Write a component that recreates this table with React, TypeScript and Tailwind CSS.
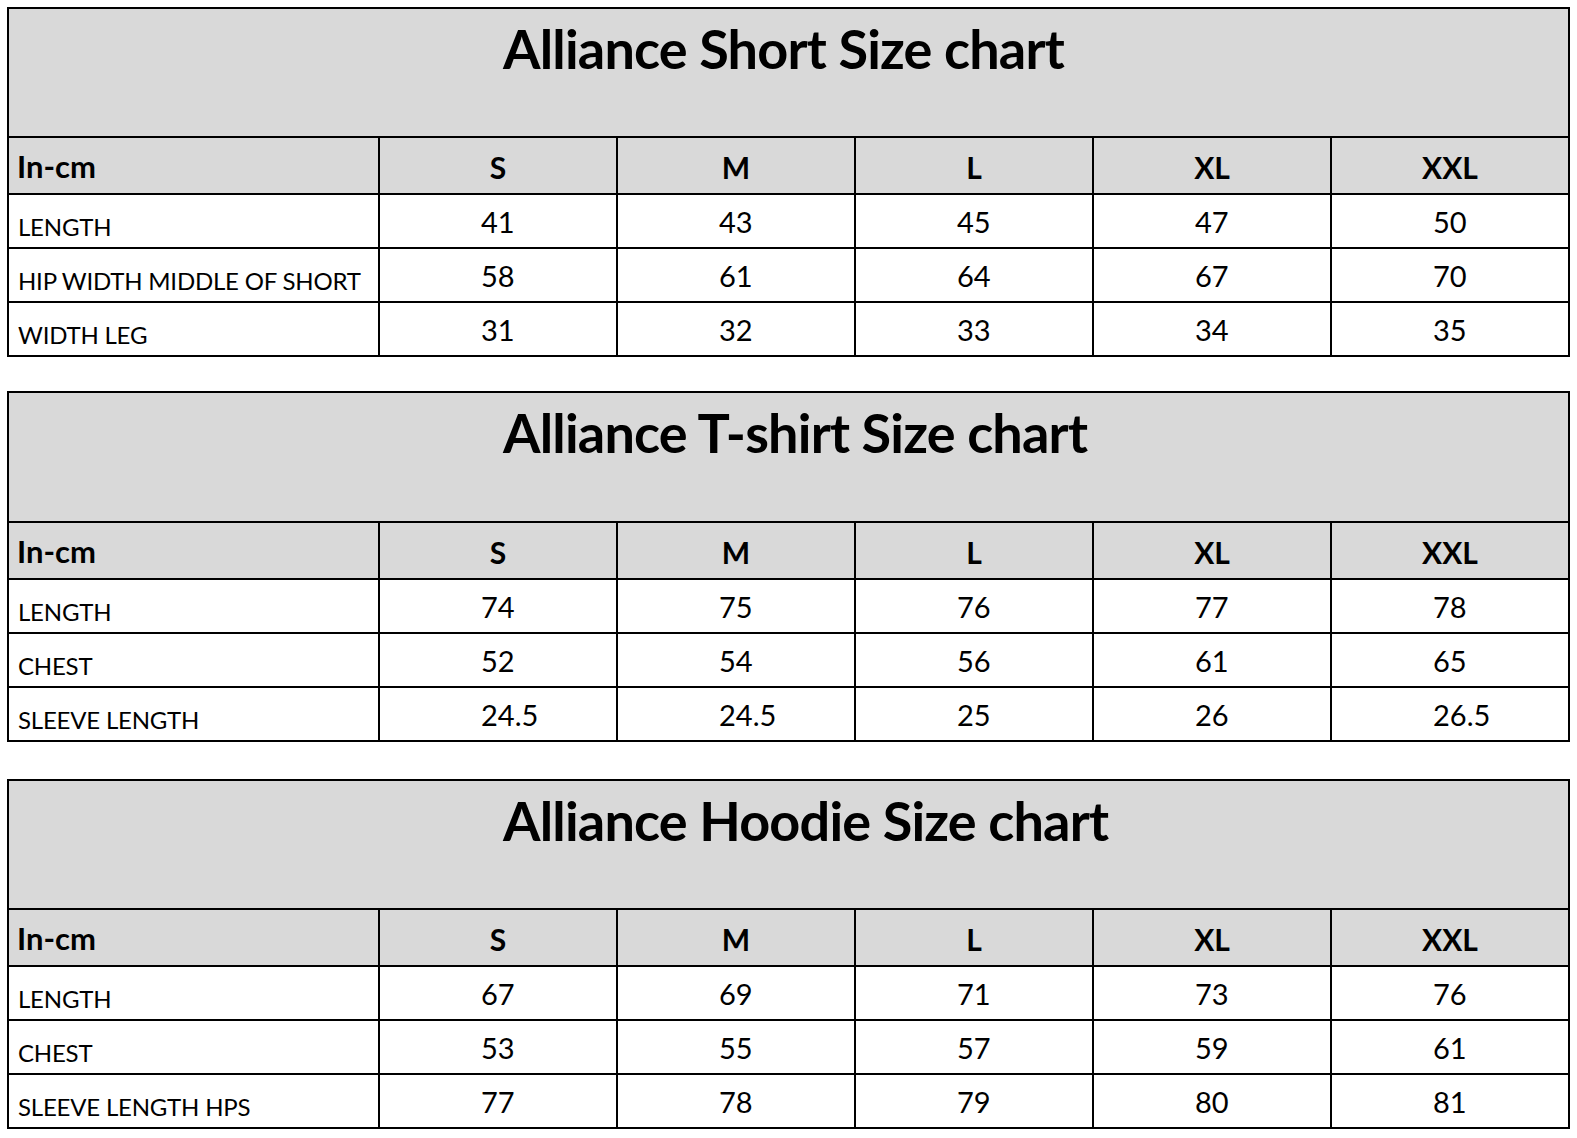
import React from "react";

type Chart = {
  title: string;
  rows: { label: string; values: string[] }[];
  mt: string;
  titleH: string;
};

const sizes = ["S", "M", "L", "XL", "XXL"];

const charts: Chart[] = [
  {
    title: "Alliance Short Size chart",
    mt: "mt-[7px]",
    titleH: "h-[129px]",
    rows: [
      { label: "LENGTH", values: ["41", "43", "45", "47", "50"] },
      { label: "HIP WIDTH MIDDLE OF SHORT", values: ["58", "61", "64", "67", "70"] },
      { label: "WIDTH LEG", values: ["31", "32", "33", "34", "35"] },
    ],
  },
  {
    title: "Alliance T-shirt Size chart",
    mt: "mt-[34px]",
    titleH: "h-[130px]",
    rows: [
      { label: "LENGTH", values: ["74", "75", "76", "77", "78"] },
      { label: "CHEST", values: ["52", "54", "56", "61", "65"] },
      { label: "SLEEVE LENGTH", values: ["24.5", "24.5", "25", "26", "26.5"] },
    ],
  },
  {
    title: "Alliance Hoodie Size chart",
    mt: "mt-[37px]",
    titleH: "h-[129px]",
    rows: [
      { label: "LENGTH", values: ["67", "69", "71", "73", "76"] },
      { label: "CHEST", values: ["53", "55", "57", "59", "61"] },
      { label: "SLEEVE LENGTH HPS", values: ["77", "78", "79", "80", "81"] },
    ],
  },
];

function Table({ chart }: { chart: Chart }) {
  return (
    <div
      className={`${chart.mt} ml-[7px] w-[1563px] border-l-2 border-t-2 border-black grid grid-cols-[371px_repeat(5,238px)]`}
    >
      <div
        className={`col-span-6 ${chart.titleH} bg-[#d9d9d9] border-r-2 border-b-2 border-black pl-[494px] pt-[13px]`}
      >
        <span className="text-[54px] font-bold leading-none tracking-[-0.8px] text-black whitespace-nowrap">
          {chart.title}
        </span>
      </div>
      <div className="h-[57px] bg-[#d9d9d9] border-r-2 border-b-2 border-black flex items-end pl-[8px] pb-[11px]">
        <span className="text-[31px] font-bold leading-none text-black">In-cm</span>
      </div>
      {sizes.map((s) => (
        <div
          key={s}
          className="h-[57px] bg-[#d9d9d9] border-r-2 border-b-2 border-black flex items-end justify-center pb-[11px]"
        >
          <span className="text-[30px] font-bold leading-none text-black">{s}</span>
        </div>
      ))}
      {chart.rows.map((r) => (
        <React.Fragment key={r.label}>
          <div className="h-[54px] bg-white border-r-2 border-b-2 border-black flex items-end pl-[9px] pb-[8px]">
            <span className="text-[24px] tracking-[-0.2px] leading-none text-black whitespace-nowrap">
              {r.label}
            </span>
          </div>
          {r.values.map((v, i) => (
            <div
              key={i}
              className="h-[54px] bg-white border-r-2 border-b-2 border-black flex items-end justify-center pb-[11px]"
            >
              <span className="inline-block w-[34px] text-left whitespace-nowrap text-[29px] leading-none text-black">
                {v}
              </span>
            </div>
          ))}
        </React.Fragment>
      ))}
    </div>
  );
}

export default function App() {
  return (
    <div className="w-[1577px] h-[1138px] bg-white overflow-hidden font-['Lato',sans-serif] flex flex-col">
      {charts.map((c) => (
        <Table key={c.title} chart={c} />
      ))}
    </div>
  );
}
